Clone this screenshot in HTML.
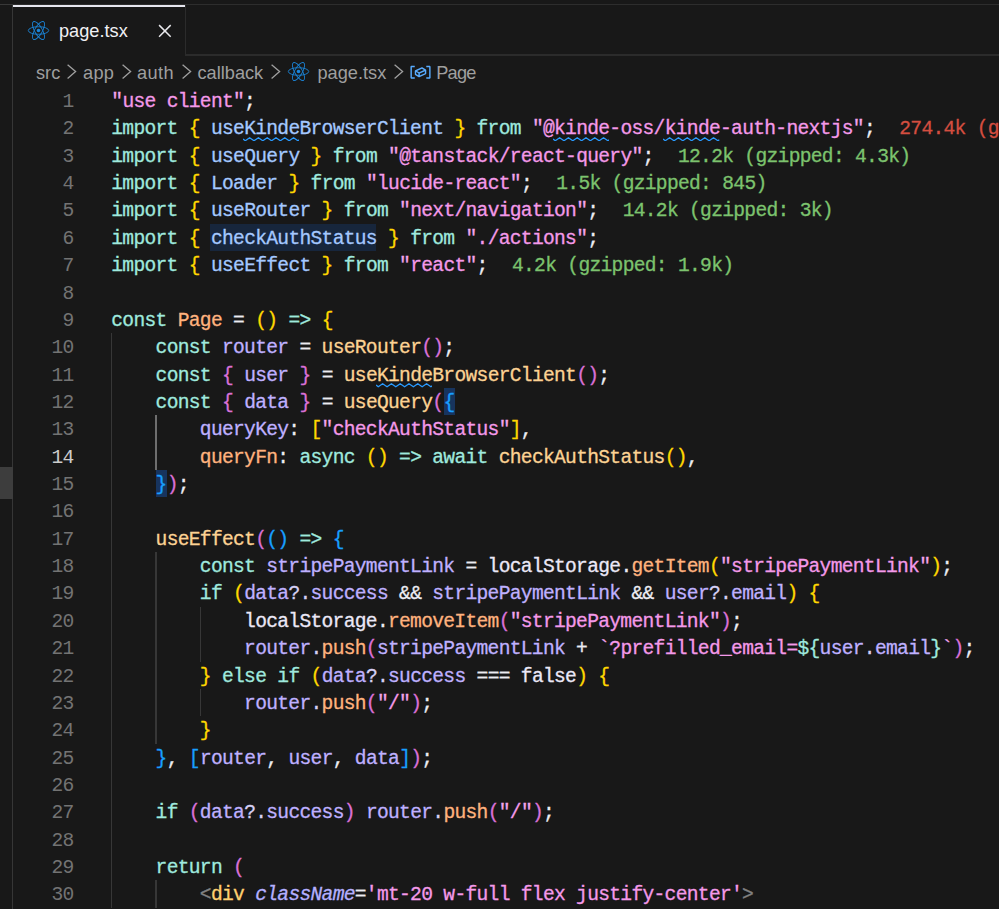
<!DOCTYPE html>
<html><head><meta charset="utf-8"><title>page.tsx</title>
<style>
html,body{margin:0;padding:0;}
body{width:999px;height:909px;overflow:hidden;background:#181818;position:relative;font-family:"Liberation Sans",sans-serif;}
.abs{position:absolute;}
#topline{left:0;top:4px;width:999px;height:1px;background:linear-gradient(90deg,#383838 13px,#2d2d2d 13px);}
#leftline{left:12px;top:5px;width:1px;height:904px;background:#363636;}
#tabtop{left:13px;top:5px;width:172px;height:2px;background:#e6e6ee;}
#tabright{left:185px;top:5px;width:1.3px;height:51px;background:#2b2b2b;}
#tabbottom{left:185px;top:54px;width:814px;height:2px;background:#2b2b2b;}
#leftblock{left:0;top:467px;width:13px;height:32px;background:#3d3d3d;z-index:2;}
.ui{position:absolute;white-space:pre;font-family:"Liberation Sans",sans-serif;font-size:18.2px;line-height:24px;color:#9f9f9f;}
#tabtxt{left:59px;top:19px;color:#f0f0f4;}
.chev{position:absolute;}
.ln{position:absolute;left:0;width:73.6px;text-align:right;font-family:"Liberation Mono",monospace;font-size:19.6px;letter-spacing:-0.693px;line-height:27.36px;height:27.36px;color:#737373;white-space:pre;}
.ln.act{color:#cccccc;}
.cl{position:absolute;left:111.3px;font-family:"Liberation Mono",monospace;font-size:19.6px;letter-spacing:-0.693px;line-height:27.36px;height:27.36px;color:#d8d8e0;white-space:pre;}
.cl span{-webkit-text-stroke-width:0.3px;}
.k{color:#9fe9de;}
.v{color:#a4c8ff;}
.c{color:#bfb0ff;}
.f{color:#ffb27e;}
.fc{color:#fcd293;}
.s{color:#f499e9;}
.q{color:#f2a4ea;}
.p{color:#ececf2;}
.pd{color:#d6d0f4;}
.an{margin-left:2.2px;}
.w{color:#ebe8f7;}
.b1{color:#ffd700;}
.b2{color:#da70d6;}
.b3{color:#179fff;}
.g{color:#7cc36e;}
.r{color:#d44e40;}
.t{color:#ffd070;}
.tg{color:#808080;}
.i{color:#b4b0ff;font-style:italic;}
.box{position:absolute;height:27.36px;}
.sqg{position:absolute;height:4.4px;}
.ig{position:absolute;width:1.4px;background:#373737;}
.iga{background:#6e6e6e;width:2px;}
</style></head><body>
<div class="abs" id="topline"></div>
<div class="abs" id="leftline"></div>
<div class="abs" id="leftblock"></div>
<div class="abs" id="tabtop"></div>
<div class="abs" id="tabright"></div>
<div class="abs" id="tabbottom"></div>

<!-- tab -->
<svg class="abs" style="left:27px;top:19px" width="23" height="23" viewBox="-11.5 -11.5 23 23"><g fill="none" stroke="#1b82d4" stroke-width="0.9"><ellipse rx="10.2" ry="3.8"/><ellipse rx="10.2" ry="3.8" transform="rotate(60)"/><ellipse rx="10.2" ry="3.8" transform="rotate(120)"/></g><circle r="1.8" fill="#1b86da"/></svg>
<div class="ui" id="tabtxt">page.tsx</div>
<svg class="abs" style="left:158px;top:23.6px" width="14" height="14" viewBox="0 0 14 14"><path d="M1.1 1.1 L12.7 12.7 M12.7 1.1 L1.1 12.7" stroke="#e8e8ec" stroke-width="1.5" fill="none"/></svg>

<!-- breadcrumbs -->
<div class="ui" style="left:36px;top:61px">src</div>
<div class="ui" style="left:83px;top:61px;letter-spacing:0.3px">app</div>
<div class="ui" style="left:137px;top:61px;letter-spacing:0.4px">auth</div>
<div class="ui" style="left:197.5px;top:61px">callback</div>
<div class="ui" style="left:317.5px;top:61px">page.tsx</div>
<div class="ui" style="left:436.2px;top:61px;letter-spacing:-0.75px">Page</div>
<svg class="chev" style="left:66px;top:64px" width="12" height="18" viewBox="0 0 12 18"><path d="M1.6 0.8 L9.6 7.6 L1.6 14.4" stroke="#a0a0a0" stroke-width="1.3" fill="none"/></svg>
<svg class="chev" style="left:121px;top:64px" width="12" height="18" viewBox="0 0 12 18"><path d="M1.6 0.8 L9.6 7.6 L1.6 14.4" stroke="#a0a0a0" stroke-width="1.3" fill="none"/></svg>
<svg class="chev" style="left:181px;top:64px" width="12" height="18" viewBox="0 0 12 18"><path d="M1.6 0.8 L9.6 7.6 L1.6 14.4" stroke="#a0a0a0" stroke-width="1.3" fill="none"/></svg>
<svg class="chev" style="left:269.5px;top:64px" width="12" height="18" viewBox="0 0 12 18"><path d="M1.6 0.8 L9.6 7.6 L1.6 14.4" stroke="#a0a0a0" stroke-width="1.3" fill="none"/></svg>
<svg class="chev" style="left:392.7px;top:64px" width="12" height="18" viewBox="0 0 12 18"><path d="M1.6 0.8 L9.6 7.6 L1.6 14.4" stroke="#a0a0a0" stroke-width="1.3" fill="none"/></svg>
<svg class="abs" style="left:286.5px;top:60px" width="23" height="23" viewBox="-11.5 -11.5 23 23"><g fill="none" stroke="#1b82d4" stroke-width="0.9"><ellipse rx="10.2" ry="3.8"/><ellipse rx="10.2" ry="3.8" transform="rotate(60)"/><ellipse rx="10.2" ry="3.8" transform="rotate(120)"/></g><circle r="1.8" fill="#1b86da"/></svg>
<svg class="abs" style="left:408.56px;top:60.24px" width="23.04" height="23.04" viewBox="0 0 16 16"><path fill="#58acff" fill-rule="evenodd" clip-rule="evenodd" d="M2 5h2V4H1.500l-.5.500v8l.5.500H4v-1H2V5zm12.500-1H12v1h2v7h-2v1h2.500l.5-.500v-8l-.5-.500zm-2.740 2.570L12 7v2.510l-.3.450-4.500 2h-.460l-2.500-1.500-.240-.430v-2.500l.3-.460 4.500-2h.460l2.500 1.500zM5 9.710l1.500.9V9.280L5 8.380v1.330zm.580-2.150l1.450.870 3.390-1.500-1.450-.870-3.390 1.500zm1.950 3.170l3.500-1.560v-1.400l-3.500 1.550v1.410z"/></svg>

<div class="ig" style="left:111.0px;top:333.24px;height:574.56px"></div>
<div class="ig iga" style="left:155.0px;top:415.32px;height:54.72px"></div>
<div class="ig" style="left:155.3px;top:552.12px;height:191.52px"></div>
<div class="ig" style="left:199.6px;top:606.84px;height:54.72px"></div>
<div class="ig" style="left:199.6px;top:688.92px;height:27.36px"></div>
<div class="ig" style="left:155.3px;top:880.44px;height:27.36px"></div>
<div class="box" style="left:209.60px;top:223.80px;width:166.00px;background:#17263c"></div>
<div class="box" style="left:443.91px;top:387.96px;width:11.07px;background:#17345e"></div>
<div class="box" style="left:156.07px;top:470.04px;width:11.07px;background:#17345e"></div>
<svg class="sqg" style="left:242.90px;top:136.96px" width="56.34" height="4.4" viewBox="0 0 56.34 4.4"><path d="M0 2.0 L2.20 3.7 L6.60 0.7 L11.00 3.7 L15.40 0.7 L19.80 3.7 L24.20 0.7 L28.60 3.7 L33.00 0.7 L37.40 3.7 L41.80 0.7 L46.20 3.7 L50.60 0.7 L55.00 3.7 L56.34 2.79" fill="none" stroke="#2a9bff" stroke-width="1.35" stroke-linejoin="round"/></svg>
<svg class="sqg" style="left:552.78px;top:136.96px" width="56.34" height="4.4" viewBox="0 0 56.34 4.4"><path d="M0 2.0 L2.20 3.7 L6.60 0.7 L11.00 3.7 L15.40 0.7 L19.80 3.7 L24.20 0.7 L28.60 3.7 L33.00 0.7 L37.40 3.7 L41.80 0.7 L46.20 3.7 L50.60 0.7 L55.00 3.7 L56.34 2.79" fill="none" stroke="#2a9bff" stroke-width="1.35" stroke-linejoin="round"/></svg>
<svg class="sqg" style="left:663.45px;top:136.96px" width="56.34" height="4.4" viewBox="0 0 56.34 4.4"><path d="M0 2.0 L2.20 3.7 L6.60 0.7 L11.00 3.7 L15.40 0.7 L19.80 3.7 L24.20 0.7 L28.60 3.7 L33.00 0.7 L37.40 3.7 L41.80 0.7 L46.20 3.7 L50.60 0.7 L55.00 3.7 L56.34 2.79" fill="none" stroke="#2a9bff" stroke-width="1.35" stroke-linejoin="round"/></svg>
<svg class="sqg" style="left:375.71px;top:383.20px" width="56.34" height="4.4" viewBox="0 0 56.34 4.4"><path d="M0 2.0 L2.20 3.7 L6.60 0.7 L11.00 3.7 L15.40 0.7 L19.80 3.7 L24.20 0.7 L28.60 3.7 L33.00 0.7 L37.40 3.7 L41.80 0.7 L46.20 3.7 L50.60 0.7 L55.00 3.7 L56.34 2.79" fill="none" stroke="#2a9bff" stroke-width="1.35" stroke-linejoin="round"/></svg>
<div class="ln" style="top:88.55px">1</div>
<div class="cl" style="top:88.55px"><span class="q">"</span><span class="s">use client</span><span class="q">"</span><span class="p">;</span></div>
<div class="ln" style="top:115.55px">2</div>
<div class="cl" style="top:115.55px"><span class="k">import</span> <span class="b1">{</span> <span class="v">useKindeBrowserClient</span> <span class="b1">}</span> <span class="k">from</span> <span class="q">"</span><span class="s">@kinde-oss/kinde-auth-nextjs</span><span class="q">"</span><span class="p">;</span><span class="an r">  274.4k (gzipped: 79.6k)</span></div>
<div class="ln" style="top:143.55px">3</div>
<div class="cl" style="top:143.55px"><span class="k">import</span> <span class="b1">{</span> <span class="v">useQuery</span> <span class="b1">}</span> <span class="k">from</span> <span class="q">"</span><span class="s">@tanstack/react-query</span><span class="q">"</span><span class="p">;</span><span class="an g">  12.2k (gzipped: 4.3k)</span></div>
<div class="ln" style="top:170.55px">4</div>
<div class="cl" style="top:170.55px"><span class="k">import</span> <span class="b1">{</span> <span class="v">Loader</span> <span class="b1">}</span> <span class="k">from</span> <span class="q">"</span><span class="s">lucide-react</span><span class="q">"</span><span class="p">;</span><span class="an g">  1.5k (gzipped: 845)</span></div>
<div class="ln" style="top:197.55px">5</div>
<div class="cl" style="top:197.55px"><span class="k">import</span> <span class="b1">{</span> <span class="v">useRouter</span> <span class="b1">}</span> <span class="k">from</span> <span class="q">"</span><span class="s">next/navigation</span><span class="q">"</span><span class="p">;</span><span class="an g">  14.2k (gzipped: 3k)</span></div>
<div class="ln" style="top:225.55px">6</div>
<div class="cl" style="top:225.55px"><span class="k">import</span> <span class="b1">{</span> <span class="v">checkAuthStatus</span> <span class="b1">}</span> <span class="k">from</span> <span class="q">"</span><span class="s">./actions</span><span class="q">"</span><span class="p">;</span></div>
<div class="ln" style="top:252.55px">7</div>
<div class="cl" style="top:252.55px"><span class="k">import</span> <span class="b1">{</span> <span class="v">useEffect</span> <span class="b1">}</span> <span class="k">from</span> <span class="q">"</span><span class="s">react</span><span class="q">"</span><span class="p">;</span><span class="an g">  4.2k (gzipped: 1.9k)</span></div>
<div class="ln" style="top:280.55px">8</div>
<div class="ln" style="top:307.55px">9</div>
<div class="cl" style="top:307.55px"><span class="k">const</span> <span class="f">Page</span> <span class="p">=</span> <span class="b1">()</span> <span class="k">=&gt;</span> <span class="b1">{</span></div>
<div class="ln" style="top:334.55px">10</div>
<div class="cl" style="top:334.55px">    <span class="k">const</span> <span class="c">router</span> <span class="p">=</span> <span class="fc">useRouter</span><span class="b2">()</span><span class="p">;</span></div>
<div class="ln" style="top:362.55px">11</div>
<div class="cl" style="top:362.55px">    <span class="k">const</span> <span class="b2">{</span> <span class="c">user</span> <span class="b2">}</span> <span class="p">=</span> <span class="fc">useKindeBrowserClient</span><span class="b2">()</span><span class="p">;</span></div>
<div class="ln" style="top:389.55px">12</div>
<div class="cl" style="top:389.55px">    <span class="k">const</span> <span class="b2">{</span> <span class="c">data</span> <span class="b2">}</span> <span class="p">=</span> <span class="fc">useQuery</span><span class="b2">(</span><span class="b3">{</span></div>
<div class="ln" style="top:416.55px">13</div>
<div class="cl" style="top:416.55px">        <span class="c">queryKey</span><span class="p">:</span> <span class="b1">[</span><span class="q">"</span><span class="s">checkAuthStatus</span><span class="q">"</span><span class="b1">]</span><span class="p">,</span></div>
<div class="ln act" style="top:444.55px">14</div>
<div class="cl" style="top:444.55px">        <span class="f">queryFn</span><span class="p">:</span> <span class="k">async</span> <span class="b1">()</span> <span class="k">=&gt;</span> <span class="k">await</span> <span class="fc">checkAuthStatus</span><span class="b1">()</span><span class="p">,</span></div>
<div class="ln" style="top:471.55px">15</div>
<div class="cl" style="top:471.55px">    <span class="b3">}</span><span class="b2">)</span><span class="p">;</span></div>
<div class="ln" style="top:498.55px">16</div>
<div class="ln" style="top:526.55px">17</div>
<div class="cl" style="top:526.55px">    <span class="fc">useEffect</span><span class="b2">(</span><span class="b3">()</span> <span class="k">=&gt;</span> <span class="b3">{</span></div>
<div class="ln" style="top:553.55px">18</div>
<div class="cl" style="top:553.55px">        <span class="k">const</span> <span class="c">stripePaymentLink</span> <span class="p">=</span> <span class="w">localStorage</span><span class="p">.</span><span class="f">getItem</span><span class="b1">(</span><span class="q">"</span><span class="s">stripePaymentLink</span><span class="q">"</span><span class="b1">)</span><span class="p">;</span></div>
<div class="ln" style="top:580.55px">19</div>
<div class="cl" style="top:580.55px">        <span class="k">if</span> <span class="b1">(</span><span class="c">data</span><span class="pd">?.</span><span class="c">success</span> <span class="p">&amp;&amp;</span> <span class="c">stripePaymentLink</span> <span class="p">&amp;&amp;</span> <span class="c">user</span><span class="pd">?.</span><span class="c">email</span><span class="b1">)</span> <span class="b1">{</span></div>
<div class="ln" style="top:608.55px">20</div>
<div class="cl" style="top:608.55px">            <span class="w">localStorage</span><span class="p">.</span><span class="f">removeItem</span><span class="b2">(</span><span class="q">"</span><span class="s">stripePaymentLink</span><span class="q">"</span><span class="b2">)</span><span class="p">;</span></div>
<div class="ln" style="top:635.55px">21</div>
<div class="cl" style="top:635.55px">            <span class="c">router</span><span class="pd">.</span><span class="f">push</span><span class="b2">(</span><span class="c">stripePaymentLink</span> <span class="p">+</span> <span class="q">`</span><span class="s">?prefilled_email=</span><span class="k">${</span><span class="c">user</span><span class="pd">.</span><span class="c">email</span><span class="k">}</span><span class="q">`</span><span class="b2">)</span><span class="p">;</span></div>
<div class="ln" style="top:663.55px">22</div>
<div class="cl" style="top:663.55px">        <span class="b1">}</span> <span class="k">else</span> <span class="k">if</span> <span class="b1">(</span><span class="c">data</span><span class="pd">?.</span><span class="c">success</span> <span class="p">===</span> <span class="w">false</span><span class="b1">)</span> <span class="b1">{</span></div>
<div class="ln" style="top:690.55px">23</div>
<div class="cl" style="top:690.55px">            <span class="c">router</span><span class="pd">.</span><span class="f">push</span><span class="b2">(</span><span class="q">"</span><span class="s">/</span><span class="q">"</span><span class="b2">)</span><span class="p">;</span></div>
<div class="ln" style="top:717.55px">24</div>
<div class="cl" style="top:717.55px">        <span class="b1">}</span></div>
<div class="ln" style="top:745.55px">25</div>
<div class="cl" style="top:745.55px">    <span class="b3">}</span><span class="p">,</span> <span class="b3">[</span><span class="c">router</span><span class="p">,</span> <span class="c">user</span><span class="p">,</span> <span class="c">data</span><span class="b3">]</span><span class="b2">)</span><span class="p">;</span></div>
<div class="ln" style="top:772.55px">26</div>
<div class="ln" style="top:799.55px">27</div>
<div class="cl" style="top:799.55px">    <span class="k">if</span> <span class="b2">(</span><span class="c">data</span><span class="pd">?.</span><span class="c">success</span><span class="b2">)</span> <span class="c">router</span><span class="pd">.</span><span class="f">push</span><span class="b2">(</span><span class="q">"</span><span class="s">/</span><span class="q">"</span><span class="b2">)</span><span class="p">;</span></div>
<div class="ln" style="top:827.55px">28</div>
<div class="ln" style="top:854.55px">29</div>
<div class="cl" style="top:854.55px">    <span class="k">return</span> <span class="b2">(</span></div>
<div class="ln" style="top:881.55px">30</div>
<div class="cl" style="top:881.55px">        <span class="tg">&lt;</span><span class="t">div</span> <span class="i">className</span><span class="p">=</span><span class="s">'mt-20 w-full flex justify-center'</span><span class="tg">&gt;</span></div>
</body></html>
